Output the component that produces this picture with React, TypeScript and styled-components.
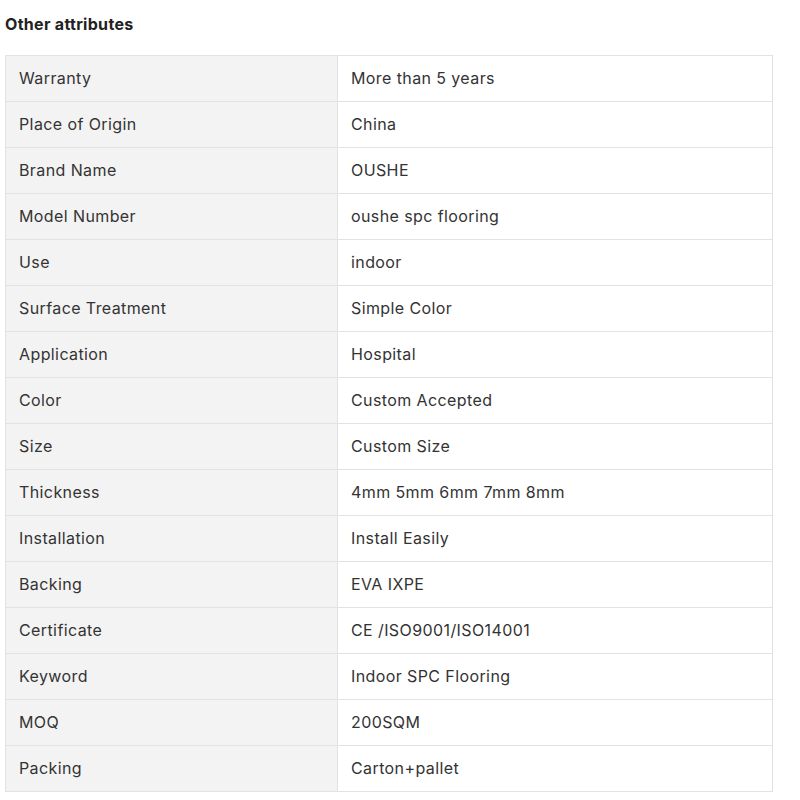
import React from "react";
import styled, { createGlobalStyle } from "styled-components";

const Global = createGlobalStyle`
  body { margin: 0; background: #fff; font-family: Inter, "Noto Sans", sans-serif; color: #333; }
`;

const Page = styled.div`
  padding: 13px 0 0 5px;
  width: 768px;
`;

const Title = styled.h3`
  margin: 0 0 20px 0;
  font-size: 16px;
  font-weight: 700;
  letter-spacing: 0.3px;
  line-height: 22px;
  color: #222;
`;

const Table = styled.table`
  border-collapse: collapse;
  width: 768px;
  table-layout: fixed;
`;

const Cell = styled.td<{ $label?: boolean }>`
  border: 1px solid #e2e2e2;
  height: 46px;
  padding: 0 13px 2px 13px;
  font-size: 16px;
  letter-spacing: 0.4px;
  line-height: 20px;
  color: #333;
  background: ${(p) => (p.$label ? "#f3f3f3" : "#fff")};
  width: ${(p) => (p.$label ? "332px" : "auto")};
  box-sizing: border-box;
`;

const rows: [string, string][] = [
  ["Warranty", "More than 5 years"],
  ["Place of Origin", "China"],
  ["Brand Name", "OUSHE"],
  ["Model Number", "oushe spc flooring"],
  ["Use", "indoor"],
  ["Surface Treatment", "Simple Color"],
  ["Application", "Hospital"],
  ["Color", "Custom Accepted"],
  ["Size", "Custom Size"],
  ["Thickness", "4mm 5mm 6mm 7mm 8mm"],
  ["Installation", "Install Easily"],
  ["Backing", "EVA IXPE"],
  ["Certificate", "CE /ISO9001/ISO14001"],
  ["Keyword", "Indoor SPC Flooring"],
  ["MOQ", "200SQM"],
  ["Packing", "Carton+pallet"],
];

export default function App() {
  return (
    <>
      <Global />
      <Page>
        <Title>Other attributes</Title>
        <Table>
          <tbody>
            {rows.map(([k, v]) => (
              <tr key={k}>
                <Cell $label>{k}</Cell>
                <Cell>{v}</Cell>
              </tr>
            ))}
          </tbody>
        </Table>
      </Page>
    </>
  );
}
